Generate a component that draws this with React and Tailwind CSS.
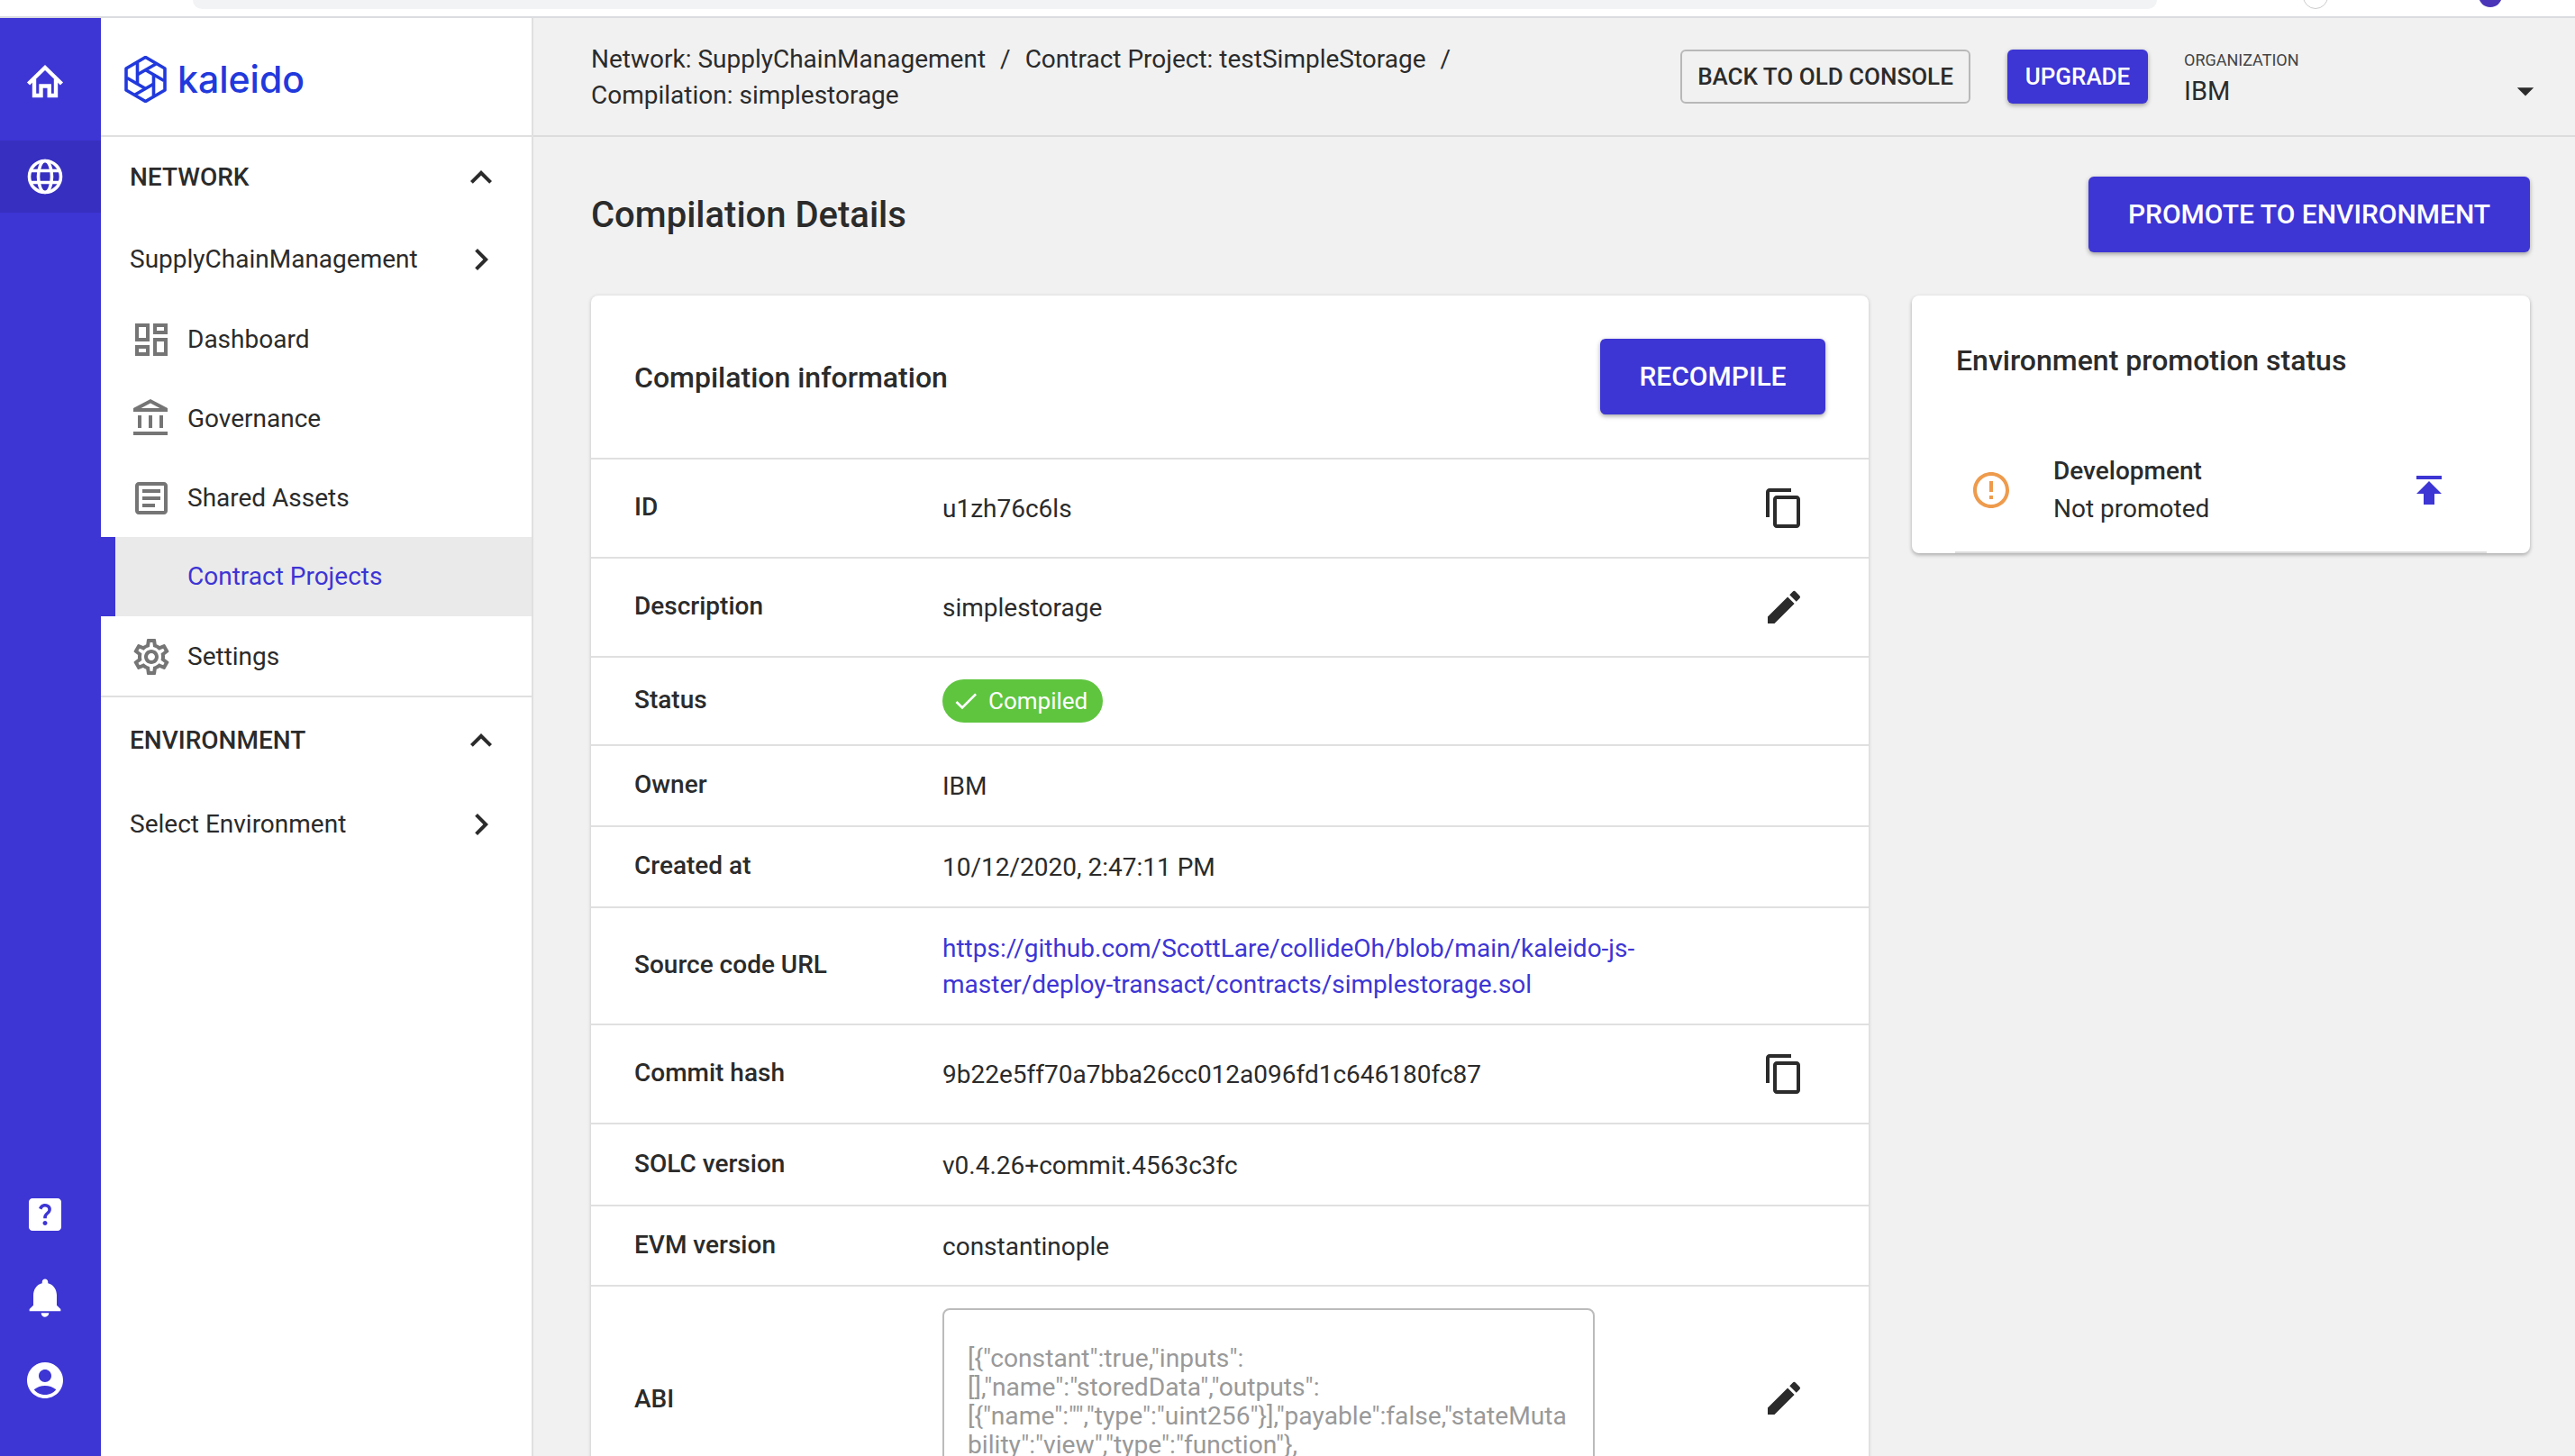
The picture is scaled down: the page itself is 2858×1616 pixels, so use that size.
import {
  MdAccountCircle,
  MdArrowDropDown,
  MdCheck,
  MdChevronRight,
  MdContentCopy,
  MdEdit,
  MdErrorOutline,
  MdHelpCenter,
  MdKeyboardArrowUp,
  MdNotifications,
  MdOutlineAccountBalance,
  MdOutlineArticle,
  MdOutlineDashboard,
  MdOutlineSettings,
  MdPublish,
} from 'react-icons/md'

const navItems = [
  { label: 'Dashboard', Icon: MdOutlineDashboard },
  { label: 'Governance', Icon: MdOutlineAccountBalance },
  { label: 'Shared Assets', Icon: MdOutlineArticle },
  { label: 'Contract Projects', active: true },
  { label: 'Settings', Icon: MdOutlineSettings },
]

const abi = `[{"constant":true,"inputs":
[],"name":"storedData","outputs":
[{"name":"","type":"uint256"}],"payable":false,"stateMuta
bility":"view","type":"function"},`

function HomeIcon() {
  return (
    <svg viewBox="0 0 60 60" className="size-[60px]" fill="none" stroke="white" strokeWidth="4.4">
      <path d="M11.500 33 30 15 48.500 33" />
      <path d="M18 28v18h7.500V35.500h9.200V46H42V28" />
    </svg>
  )
}

function GlobeIcon() {
  return (
    <svg viewBox="0 0 60 60" className="size-[60px]" fill="none" stroke="white" strokeWidth="3.6">
      <circle cx="30" cy="30" r="17.500" />
      <ellipse cx="30" cy="30" rx="7.500" ry="17.500" />
      <path d="M13 23.500h34M13 36.500h34" />
    </svg>
  )
}

function KaleidoLogo() {
  return (
    <div className="flex items-center gap-[12px] text-[#2139dc]">
      <svg viewBox="-23.500 -26 47 52" className="h-[52px] w-[47px]" fill="none" stroke="currentColor" strokeWidth="3.6" strokeLinejoin="round">
        <path d="M0-24.500 21.500-12v24L0 24.500-21.500 12v-24z" />
        {[0, 60, 120, 180, 240, 300].map((angle) => (
          <path key={angle} d="M-9-18.500V6" transform={`rotate(${angle})`} />
        ))}
      </svg>
      <span className="font-['Inter',sans-serif] text-[41px] leading-none font-medium">kaleido</span>
    </div>
  )
}

function Rail() {
  return (
    <aside className="flex w-[112px] shrink-0 flex-col bg-[#3d35d4] pb-[60px] text-white">
      <div className="flex h-[136px] items-center justify-center pt-[4px] pr-[12px]">
        <HomeIcon />
      </div>
      <div className="flex h-[80px] items-center justify-center bg-[#372fbf] pr-[12px]">
        <GlobeIcon />
      </div>
      <div className="mt-auto flex flex-col items-center gap-[42px] pr-[12px]">
        <MdHelpCenter className="size-[48px]" />
        <MdNotifications className="size-[52px]" />
        <MdAccountCircle className="size-[48px]" />
      </div>
    </aside>
  )
}

function SectionHead({ height, children }) {
  return (
    <div className={`flex ${height} items-center justify-between pr-[32px] pl-[32px] font-medium text-[#2b2b2b]`}>
      {children}
      <MdKeyboardArrowUp className="size-[48px]" />
    </div>
  )
}

function Sidebar() {
  return (
    <aside className="w-[480px] shrink-0 border-r-2 border-[#e0e0e0] bg-white text-[28px] text-[#2b2b2b]">
      <div className="flex h-[132px] items-center border-b-2 border-[#e0e0e0] pt-[6px] pl-[26px]">
        <KaleidoLogo />
      </div>
      <SectionHead height="h-[90px]">NETWORK</SectionHead>
      <div className="flex h-[90px] items-center justify-between pt-[2px] pr-[32px] pl-[32px]">
        SupplyChainManagement
        <MdChevronRight className="size-[48px]" />
      </div>
      {navItems.map(({ label, Icon, active }) =>
        active ? (
          <div key={label} className="flex h-[88px] items-center border-l-[16px] border-[#3d35d4] bg-[#eaeaea] pl-[80px] text-[#3d35d4]">
            {label}
          </div>
        ) : (
          <div key={label} className="flex h-[88px] items-center gap-[16px] pt-[1px] pl-[32px]">
            <Icon className="size-[48px] text-[#757575]" />
            {label}
          </div>
        ),
      )}
      <div className="border-t-2 border-[#e0e0e0]">
        <SectionHead height="h-[96px]">ENVIRONMENT</SectionHead>
      </div>
      <div className="flex h-[90px] items-center justify-between pr-[32px] pl-[32px]">
        Select Environment
        <MdChevronRight className="size-[48px]" />
      </div>
    </aside>
  )
}

function Header() {
  return (
    <header className="flex h-[132px] items-center border-b-2 border-[#dcdcdc] pr-[32px] pl-[64px] text-[#2b2b2b]">
      <div className="w-[1209px] pt-[2px] text-[28px] leading-[40px]">
        <div className="flex gap-[16px]">
          <span>Network: SupplyChainManagement</span>
          <span>/</span>
          <span>Contract Project: testSimpleStorage</span>
          <span>/</span>
        </div>
        <div>Compilation: simplestorage</div>
      </div>
      <button className="h-[60px] w-[322px] rounded-[6px] border-2 border-[#b8b8b8] text-[26px] font-medium">BACK TO OLD CONSOLE</button>
      <button className="ml-[41px] h-[60px] w-[156px] rounded-[6px] bg-[#3d35d4] text-[26px] font-medium text-white shadow-[0_2px_5px_rgba(0,0,0,0.35)]">UPGRADE</button>
      <div className="ml-[40px] flex-1 pt-[4px]">
        <div className="text-[18px] leading-[22px] text-[#444]">ORGANIZATION</div>
        <div className="mt-[5px] flex items-center justify-between text-[29px] leading-[36px]">
          IBM
          <MdArrowDropDown className="mr-[1px] -my-[4px] size-[44px]" />
        </div>
      </div>
    </header>
  )
}

function Row({ label, height, icon, children }) {
  return (
    <div className={`flex ${height} items-center border-b-2 border-[#e0e0e0] pr-[70px] pl-[48px]`}>
      <div className="mt-[-2px] w-[342px] shrink-0 font-medium">{label}</div>
      <div className="mt-[2px] flex-1">{children}</div>
      {icon}
    </div>
  )
}

function CompilationCard() {
  const copy = <MdContentCopy className="size-[48px]" />
  const edit = <MdEdit className="size-[48px]" />
  return (
    <section className="w-[1418px] rounded-[8px] bg-white text-[28px] leading-[40px] text-[#2b2b2b] shadow-[0_1px_4px_rgba(0,0,0,0.2)]">
      <div className="flex h-[182px] items-center justify-between border-b-2 border-[#e0e0e0] pr-[48px] pl-[48px]">
        <h2 className="mt-[2px] text-[32px] font-medium">Compilation information</h2>
        <button className="h-[84px] w-[250px] rounded-[6px] bg-[#3d35d4] text-[30px] font-medium text-white shadow-[0_2px_5px_rgba(0,0,0,0.35)]">RECOMPILE</button>
      </div>
      <Row label="ID" height="h-[110px]" icon={copy}>u1zh76c6ls</Row>
      <Row label="Description" height="h-[110px]" icon={edit}>simplestorage</Row>
      <Row label="Status" height="h-[98px]">
        <span className="inline-flex h-[48px] w-[178px] items-center gap-[9px] rounded-full bg-[#5fc53f] pl-[10px] text-[26px] text-white">
          <MdCheck className="size-[32px]" />
          Compiled
        </span>
      </Row>
      <Row label="Owner" height="h-[90px]">IBM</Row>
      <Row label="Created at" height="h-[90px]">10/12/2020, 2:47:11 PM</Row>
      <Row label="Source code URL" height="h-[130px]">
        <a className="block text-[#3d35d4]">
          https://github.com/ScottLare/collideOh/blob/main/kaleido-js-
          <br />
          master/deploy-transact/contracts/simplestorage.sol
        </a>
      </Row>
      <Row label="Commit hash" height="h-[110px]" icon={copy}>9b22e5ff70a7bba26cc012a096fd1c646180fc87</Row>
      <Row label="SOLC version" height="h-[91px]">v0.4.26+commit.4563c3fc</Row>
      <Row label="EVM version" height="h-[89px]">constantinople</Row>
      <div className="flex h-[248px] items-center pr-[70px] pl-[48px]">
        <div className="mt-[2px] w-[342px] shrink-0 font-medium">ABI</div>
        <div className="flex-1">
          <div className="h-[200px] w-[724px] rounded-[8px] border-2 border-[#bbbbbb] pt-[38px] pl-[26px] text-[28.2px] leading-[32px] whitespace-pre text-[#999999]">
            {abi}
          </div>
        </div>
        {edit}
      </div>
    </section>
  )
}

function PromotionCard() {
  return (
    <section className="h-[286px] flex-1 rounded-[8px] bg-white text-[28px] text-[#2b2b2b] shadow-[0_2px_4px_rgba(0,0,0,0.3)]">
      <h2 className="pt-[50px] pl-[49px] text-[32px] leading-[44px] font-medium">Environment promotion status</h2>
      <div className="mt-[80px] flex items-center pr-[88px] pl-[64px] leading-[42px]">
        <MdErrorOutline className="size-[48px] text-[#ee9b4d]" />
        <div className="ml-[45px] flex-1">
          <div className="font-medium">Development</div>
          <div>Not promoted</div>
        </div>
        <MdPublish className="size-[48px] text-[#3d35d4]" />
      </div>
      <div className="mx-[48px] mt-[26px] border-b-2 border-[#dddddd]" />
    </section>
  )
}

export default function App() {
  return (
    <div className="h-[1616px] w-[2858px] overflow-hidden bg-white font-['Roboto',sans-serif]">
      <div className="relative h-[20px] border-b-2 border-[#dadce0]">
        <div className="ml-[214px] h-[10px] w-[2180px] rounded-b-[14px] bg-[#f1f3f4]" />
        <div className="absolute top-[-18px] left-[2556px] size-[28px] rounded-full border border-[#cccccc] bg-white" />
        <div className="absolute top-[-18px] left-[2751px] size-[26px] rounded-full bg-[#4a35b8]" />
      </div>
      <div className="flex h-[1596px]">
        <Rail />
        <Sidebar />
        <div className="flex-1 bg-[#f1f1f1]">
          <Header />
          <main className="pt-[44px] pr-[50px] pl-[64px]">
            <div className="mb-[48px] flex h-[84px] items-center justify-between">
              <h1 className="mt-[2px] text-[40px] font-medium text-[#2b2b2b]">Compilation Details</h1>
              <button className="h-[84px] w-[490px] rounded-[6px] bg-[#3d35d4] pb-[2px] text-[30px] font-medium text-white shadow-[0_2px_5px_rgba(0,0,0,0.35)]">PROMOTE TO ENVIRONMENT</button>
            </div>
            <div className="flex items-start gap-[48px]">
              <CompilationCard />
              <PromotionCard />
            </div>
          </main>
        </div>
      </div>
    </div>
  )
}
